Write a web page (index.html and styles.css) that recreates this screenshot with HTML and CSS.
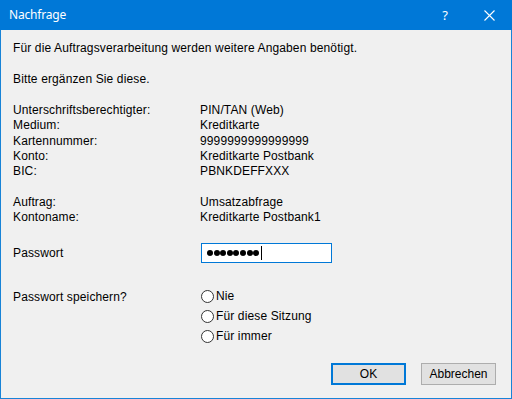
FILE: index.html
```html
<!DOCTYPE html>
<html lang="de">
<head>
<meta charset="utf-8">
<title>Nachfrage</title>
<link rel="stylesheet" href="styles.css">
</head>
<body>
<div class="window">
  <div class="titlebar">
    <span class="title">Nachfrage</span>
    <div class="controls">
      <span class="ctl help">?</span>
      <span class="ctl close"><svg width="11" height="11" viewBox="0 0 11 11"><path d="M0.5 0.5 L10.5 10.5 M10.5 0.5 L0.5 10.5" stroke="#fff" stroke-width="1.1" fill="none"/></svg></span>
    </div>
  </div>
  <div class="content">
    <p class="line intro">Für die Auftragsverarbeitung werden weitere Angaben benötigt.</p>
    <p class="line ask">Bitte ergänzen Sie diese.</p>
    <div class="pairs first">
      <span>Unterschriftsberechtigter:</span><span>PIN/TAN (Web)</span>
      <span>Medium:</span><span>Kreditkarte</span>
      <span>Kartennummer:</span><span>9999999999999999</span>
      <span>Konto:</span><span>Kreditkarte Postbank</span>
      <span>BIC:</span><span>PBNKDEFFXXX</span>
    </div>
    <div class="pairs second">
      <span>Auftrag:</span><span>Umsatzabfrage</span>
      <span>Kontoname:</span><span>Kreditkarte Postbank1</span>
    </div>
    <div class="field pw">
      <span class="label">Passwort</span>
      <div class="input">
        <span class="dot"></span><span class="dot"></span><span class="dot"></span><span class="dot"></span><span class="dot"></span><span class="dot"></span><span class="dot"></span><span class="dot"></span><span class="caret"></span>
      </div>
    </div>
    <div class="field save">
      <span class="label">Passwort speichern?</span>
      <div class="radios">
        <label class="radio"><span class="circle"></span>Nie</label>
        <label class="radio"><span class="circle"></span>Für diese Sitzung</label>
        <label class="radio"><span class="circle"></span>Für immer</label>
      </div>
    </div>
    <div class="buttons">
      <button class="btn default">OK</button>
      <button class="btn">Abbrechen</button>
    </div>
  </div>
</div>
</body>
</html>
```
FILE: styles.css
```css
* { box-sizing: border-box; }
html, body { margin: 0; padding: 0; }
body { width: 512px; height: 399px; overflow: hidden; background: #f0f0f0; }

.window {
  width: 512px;
  height: 399px;
  border: 1px solid #1883d7;
  border-top: none;
  background: #f0f0f0;
  display: flex;
  flex-direction: column;
  font-family: "Liberation Sans", Arial, sans-serif;
  font-size: 12px;
  color: #000;
}

.titlebar {
  height: 30px;
  background: #0078d7;
  display: flex;
  align-items: center;
  justify-content: space-between;
  margin: 0 -1px;
  padding-left: 9px;
}
.title {
  color: #fff;
  font-family: "Noto Sans", "Open Sans", sans-serif;
  font-size: 12px;
  letter-spacing: -0.2px;
  padding-bottom: 1px;
}
.controls { display: flex; height: 30px; }
.ctl {
  width: 46px;
  height: 30px;
  display: flex;
  align-items: center;
  justify-content: center;
  color: #fff;
}
.help {
  font-family: "Noto Sans", sans-serif;
  font-size: 13px;
  padding-left: 4px;
}
.close { padding-top: 1px; }

.content {
  flex: 1;
  padding: 11px 15px 0 12px;
  display: flex;
  flex-direction: column;
  letter-spacing: 0.13px;
}
.line { margin: 0; line-height: 15px; }
.ask { margin-top: 16px; }

.pairs {
  display: grid;
  grid-template-columns: 187px auto;
  grid-auto-rows: 15.25px;
  line-height: 15px;
}
.first { margin-top: 16px; }
.second { margin-top: 15.75px; }

.field {
  display: grid;
  grid-template-columns: 188px auto;
}
.pw { margin-top: 17.5px; align-items: center; }
.pw .label { line-height: 15px; }
.input {
  width: 131px;
  height: 20px;
  border: 1px solid #0078d7;
  background: #fff;
  display: flex;
  align-items: center;
  padding-left: 5px;
}
.dot {
  width: 6px;
  height: 6px;
  border-radius: 50%;
  background: #000;
  margin-right: 0.6px;
}
.caret {
  width: 1px;
  height: 14px;
  background: #000;
  margin-left: 1.5px;
}

.save { margin-top: 23px; align-items: start; }
.save .label { line-height: 20px; padding-top: 1px; }
.radios { display: flex; flex-direction: column; }
.radio {
  height: 20px;
  display: flex;
  align-items: center;
}
.circle {
  width: 13px;
  height: 13px;
  border: 1px solid #333;
  border-radius: 50%;
  background: #fff;
  margin-right: 2px;
}

.buttons {
  margin-top: 17px;
  display: flex;
  justify-content: flex-end;
  gap: 15px;
}
.btn {
  width: 75px;
  height: 22px;
  border: 1px solid #adadad;
  background: #e1e1e1;
  font-family: "Liberation Sans", Arial, sans-serif;
  font-size: 12px;
  color: #000;
  padding: 0;
}
.btn.default { border: 2px solid #0078d7; }
```
